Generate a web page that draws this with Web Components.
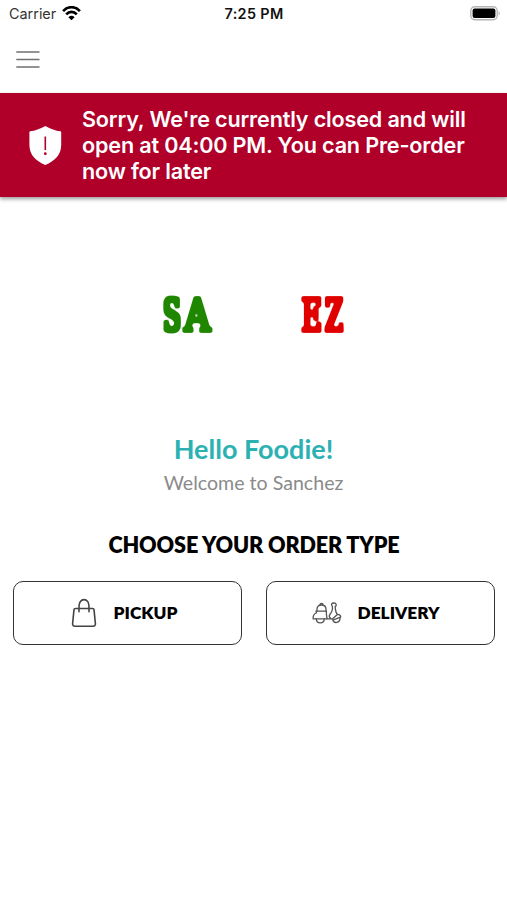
<!DOCTYPE html>
<html lang="en">
<head>
<meta charset="utf-8">
<meta name="viewport" content="width=device-width, initial-scale=1">
<title>Sanchez</title>
<style>
html,body{margin:0;height:100%;background:#fff}
body{font-family:Lato,'Liberation Sans',sans-serif;color:#000;overflow:hidden}
</style>
</head>
<body>
<order-home>
  <status-bar slot="top" carrier="Carrier" time="7:25 PM"></status-bar>
  <nav-bar slot="top"></nav-bar>
  <closed-banner slot="top">Sorry, We're currently closed and will<br>open at 04:00 PM. You can Pre-order<br>now for later</closed-banner>
  <shop-logo></shop-logo>
  <welcome-text>
    <span slot="title">Hello Foodie!</span>
    <span slot="sub">Welcome to Sanchez</span>
  </welcome-text>
  <order-types>
    <span slot="title">CHOOSE YOUR ORDER TYPE</span>
    <order-button icon="bag">PICKUP</order-button>
    <order-button icon="scooter">DELIVERY</order-button>
  </order-types>
</order-home>

<script>
(function(){
  const ICONS = {
    bag: `<svg width="26" height="30" viewBox="0 0 26 30">
      <path d="M4.4 10.5H21.6Q22.8 10.5 23 11.7L24.4 25.6Q24.6 28.2 22 28.2H4Q1.4 28.2 1.6 25.6L3 11.7Q3.2 10.5 4.4 10.5Z"/>
      <path d="M8 13.7V8.5C8 4.5 10 1.6 13 1.6S18 4.5 18 8.5V13.7"/>
    </svg>`,
    scooter: `<svg class="thin" width="30" height="22" viewBox="0 0 30 22">
      <path d="M5 9.2V7.2C5 4.4 7 3 9.5 3S14 4.4 14 7.2V9.2"/>
      <path d="M8 2.9Q8 1.5 9.5 1.5T11 2.9"/>
      <path d="M4 9.2H14.4V12L15 16.8H1.2C.8 13.6 2 11.8 4.4 11Z"/>
      <path d="M4.3 16.8C4.3 22.2 12.3 22.2 12.3 16.8"/>
      <path d="M15 16.8H20.6L25.4 12.4C24 11 23.4 8.8 23.2 4.6C25 3.6 24.4 1 22 1C19.4 1 18.8 2.8 20.4 4.4C20.9 8.5 19.5 10.5 18 12.2C17 13.6 17.4 15.6 18.8 16.8"/>
      <path d="M25.4 12.4C27.6 12.4 28.8 13.6 28.7 15.2L21.4 17.8"/>
      <path d="M20.8 17.6C21.6 21.9 28.2 21.4 28 15.7"/>
    </svg>`
  };

  class OrderHome extends HTMLElement {
    constructor(){
      super();
      this.attachShadow({mode:'open'}).innerHTML = `
<style>
:host{display:flex;flex-direction:column;width:100%;height:100vh;background:#fff}
main{display:flex;flex-direction:column}
</style>
<slot name="top"></slot>
<main><slot></slot></main>
`;
    }
  }

  class StatusBar extends HTMLElement {
    constructor(){
      super();
      this.attachShadow({mode:'open'}).innerHTML = `
<style>
:host{display:block;height:26px;font-family:Inter,'Liberation Sans',sans-serif;font-size:14.4px}
.bar{display:grid;grid-template-columns:1fr auto 1fr;align-items:center;height:26px;padding:1px 6px 0 9px;box-sizing:border-box}
.left{display:flex;align-items:center;gap:6px;color:#333}
.time{font-weight:600;color:#111;letter-spacing:.35px;margin-right:2px}
.battery{justify-self:end}
svg{display:block}
</style>
<div class="bar">
  <div class="left">
    <span class="carrier">${this.getAttribute('carrier')}</span>
    <svg width="19" height="15" viewBox="0 0 19 15" fill="none" stroke="#000" stroke-width="2.7">
      <path d="M1.1 5.1C6-.1 13-.1 17.9 5.1"/>
      <path d="M4.2 8.3C7.3 5 11.7 5 14.8 8.3"/>
      <path d="M9.5 14.3L6.4 11.2Q9.5 8.4 12.6 11.2Z" fill="#000" stroke="none"/>
    </svg>
  </div>
  <span class="time">${this.getAttribute('time')}</span>
  <svg class="battery" width="31" height="15" viewBox="0 0 31 15">
    <rect x=".8" y=".8" width="26.4" height="13" rx="4" fill="#fff" stroke="#b5b5b5" stroke-width="1.4"/>
    <rect x="2.6" y="2.6" width="22.8" height="9.4" rx="2" fill="#000"/>
    <path d="M28.6 5Q31 7.3 28.6 9.7Z" fill="#b0b0b0"/>
  </svg>
</div>
`;
    }
  }

  class NavBar extends HTMLElement {
    constructor(){
      super();
      this.attachShadow({mode:'open'}).innerHTML = `
<style>
:host{display:block;height:67px}
button{display:block;padding:25px 16px 22px;margin:0;border:0;background:transparent;cursor:pointer}
svg{display:block}
</style>
<button aria-label="Menu">
  <svg width="24" height="18" viewBox="0 0 24 18" stroke="#707070" stroke-width="1.5"><path d="M.3 1H23.5M.3 8.5H23.5M.3 16H23.5"/></svg>
</button>
`;
    }
  }

  class ClosedBanner extends HTMLElement {
    constructor(){
      super();
      this.attachShadow({mode:'open'}).innerHTML = `
<style>
:host{display:flex;align-items:center;gap:20px;height:104px;padding:0 29px;box-sizing:border-box;
  background:#b00029;color:#fff;box-shadow:0 2px 4px rgba(0,0,0,.4);
  font:600 21.6px/26px Inter,'Liberation Sans',sans-serif;letter-spacing:-.17px}
svg{display:block;flex:none}
p{margin:0;white-space:nowrap}
</style>
<svg width="33" height="39" viewBox="0 0 33 39">
  <path d="M16.3 0C11 3.2 6 4.7 1.2 5.3Q.4 5.4 .4 6.4V19C.4 29 7 35 16.3 39C25.6 35 32.2 29 32.2 19V6.4Q32.2 5.4 31.4 5.3C26.6 4.7 21.6 3.2 16.3 0Z" fill="#fff"/>
  <path d="M16.3 10.5V24" stroke="#b00029" stroke-width="1.6"/>
  <circle cx="16.3" cy="27.7" r="1.4" fill="#b00029"/>
</svg>
<p><slot></slot></p>
`;
    }
  }

  class ShopLogo extends HTMLElement {
    constructor(){
      super();
      // the middle letters of the wordmark are white on white, so only both ends are set
      // the filter thickens every stroke evenly and rounds the slabs
      this.attachShadow({mode:'open'}).innerHTML = `
<style>
:host{display:flex;justify-content:center;padding-top:75px}
svg{display:block;overflow:visible}
text{font-family:'DejaVu Serif',serif;font-size:45px}
g{filter:url(#slab)}
.green{fill:#1f8600}
.red{fill:#e00000}
</style>
<svg width="190" height="88" viewBox="0 0 190 88">
  <filter id="slab" filterUnits="userSpaceOnUse" x="-5" y="0" width="200" height="88" color-interpolation-filters="sRGB">
    <feMorphology operator="dilate" radius="2"/>
    <feGaussianBlur stdDeviation="1.1"/>
    <feComponentTransfer><feFuncA type="linear" slope="3" intercept="-1.1"/></feComponentTransfer>
  </filter>
  <g class="green">
    <text transform="translate(4 59) scale(.58 1)">S</text>
    <text transform="translate(25.6 59) scale(.79 1)">A</text>
  </g>
  <g class="red">
    <text transform="translate(142.8 59) scale(.61 1)">E</text>
    <text transform="translate(166.3 59) scale(.56 1)">Z</text>
  </g>
</svg>
`;
    }
  }

  class WelcomeText extends HTMLElement {
    constructor(){
      super();
      this.attachShadow({mode:'open'}).innerHTML = `
<style>
:host{display:flex;flex-direction:column;align-items:center;padding-top:72px}
.title{font-size:27px;line-height:34px;font-weight:700;color:#2cb1b3}
.sub{font-size:19.6px;line-height:24px;color:#8a8a8a;margin-top:5px}
</style>
<div class="title"><slot name="title"></slot></div>
<div class="sub"><slot name="sub"></slot></div>
`;
    }
  }

  class OrderTypes extends HTMLElement {
    constructor(){
      super();
      this.attachShadow({mode:'open'}).innerHTML = `
<style>
:host{display:block;padding:36px 12px 0 13px}
.title{text-align:center;font-size:21.6px;line-height:28px;font-weight:800;letter-spacing:-.12px}
.row{display:grid;grid-template-columns:1fr 1fr;gap:24px;margin-top:22px}
</style>
<div class="title"><slot name="title"></slot></div>
<div class="row"><slot></slot></div>
`;
    }
  }

  class OrderButton extends HTMLElement {
    constructor(){
      super();
      this.attachShadow({mode:'open'}).innerHTML = `
<style>
:host{display:block}
button{display:flex;align-items:center;justify-content:center;gap:17px;width:100%;height:64px;margin:0;
  padding:0 7px 0 0;box-sizing:border-box;border:1.4px solid #333;border-radius:10px;background:#fff;color:#000;
  font:800 17.3px/22px Lato,'Liberation Sans',sans-serif;cursor:pointer}
:host([icon=scooter]) button{gap:16px;padding-right:10px}
svg{display:block;fill:none;stroke:#444;stroke-width:1.6;stroke-linecap:round;stroke-linejoin:round}
svg.thin{stroke:#555;stroke-width:1.3}
</style>
<button>${ICONS[this.getAttribute('icon')]}<span><slot></slot></span></button>
`;
    }
  }

  customElements.define('order-home',OrderHome);
  customElements.define('status-bar',StatusBar);
  customElements.define('nav-bar',NavBar);
  customElements.define('closed-banner',ClosedBanner);
  customElements.define('shop-logo',ShopLogo);
  customElements.define('welcome-text',WelcomeText);
  customElements.define('order-types',OrderTypes);
  customElements.define('order-button',OrderButton);
})();
</script>
</body>
</html>
